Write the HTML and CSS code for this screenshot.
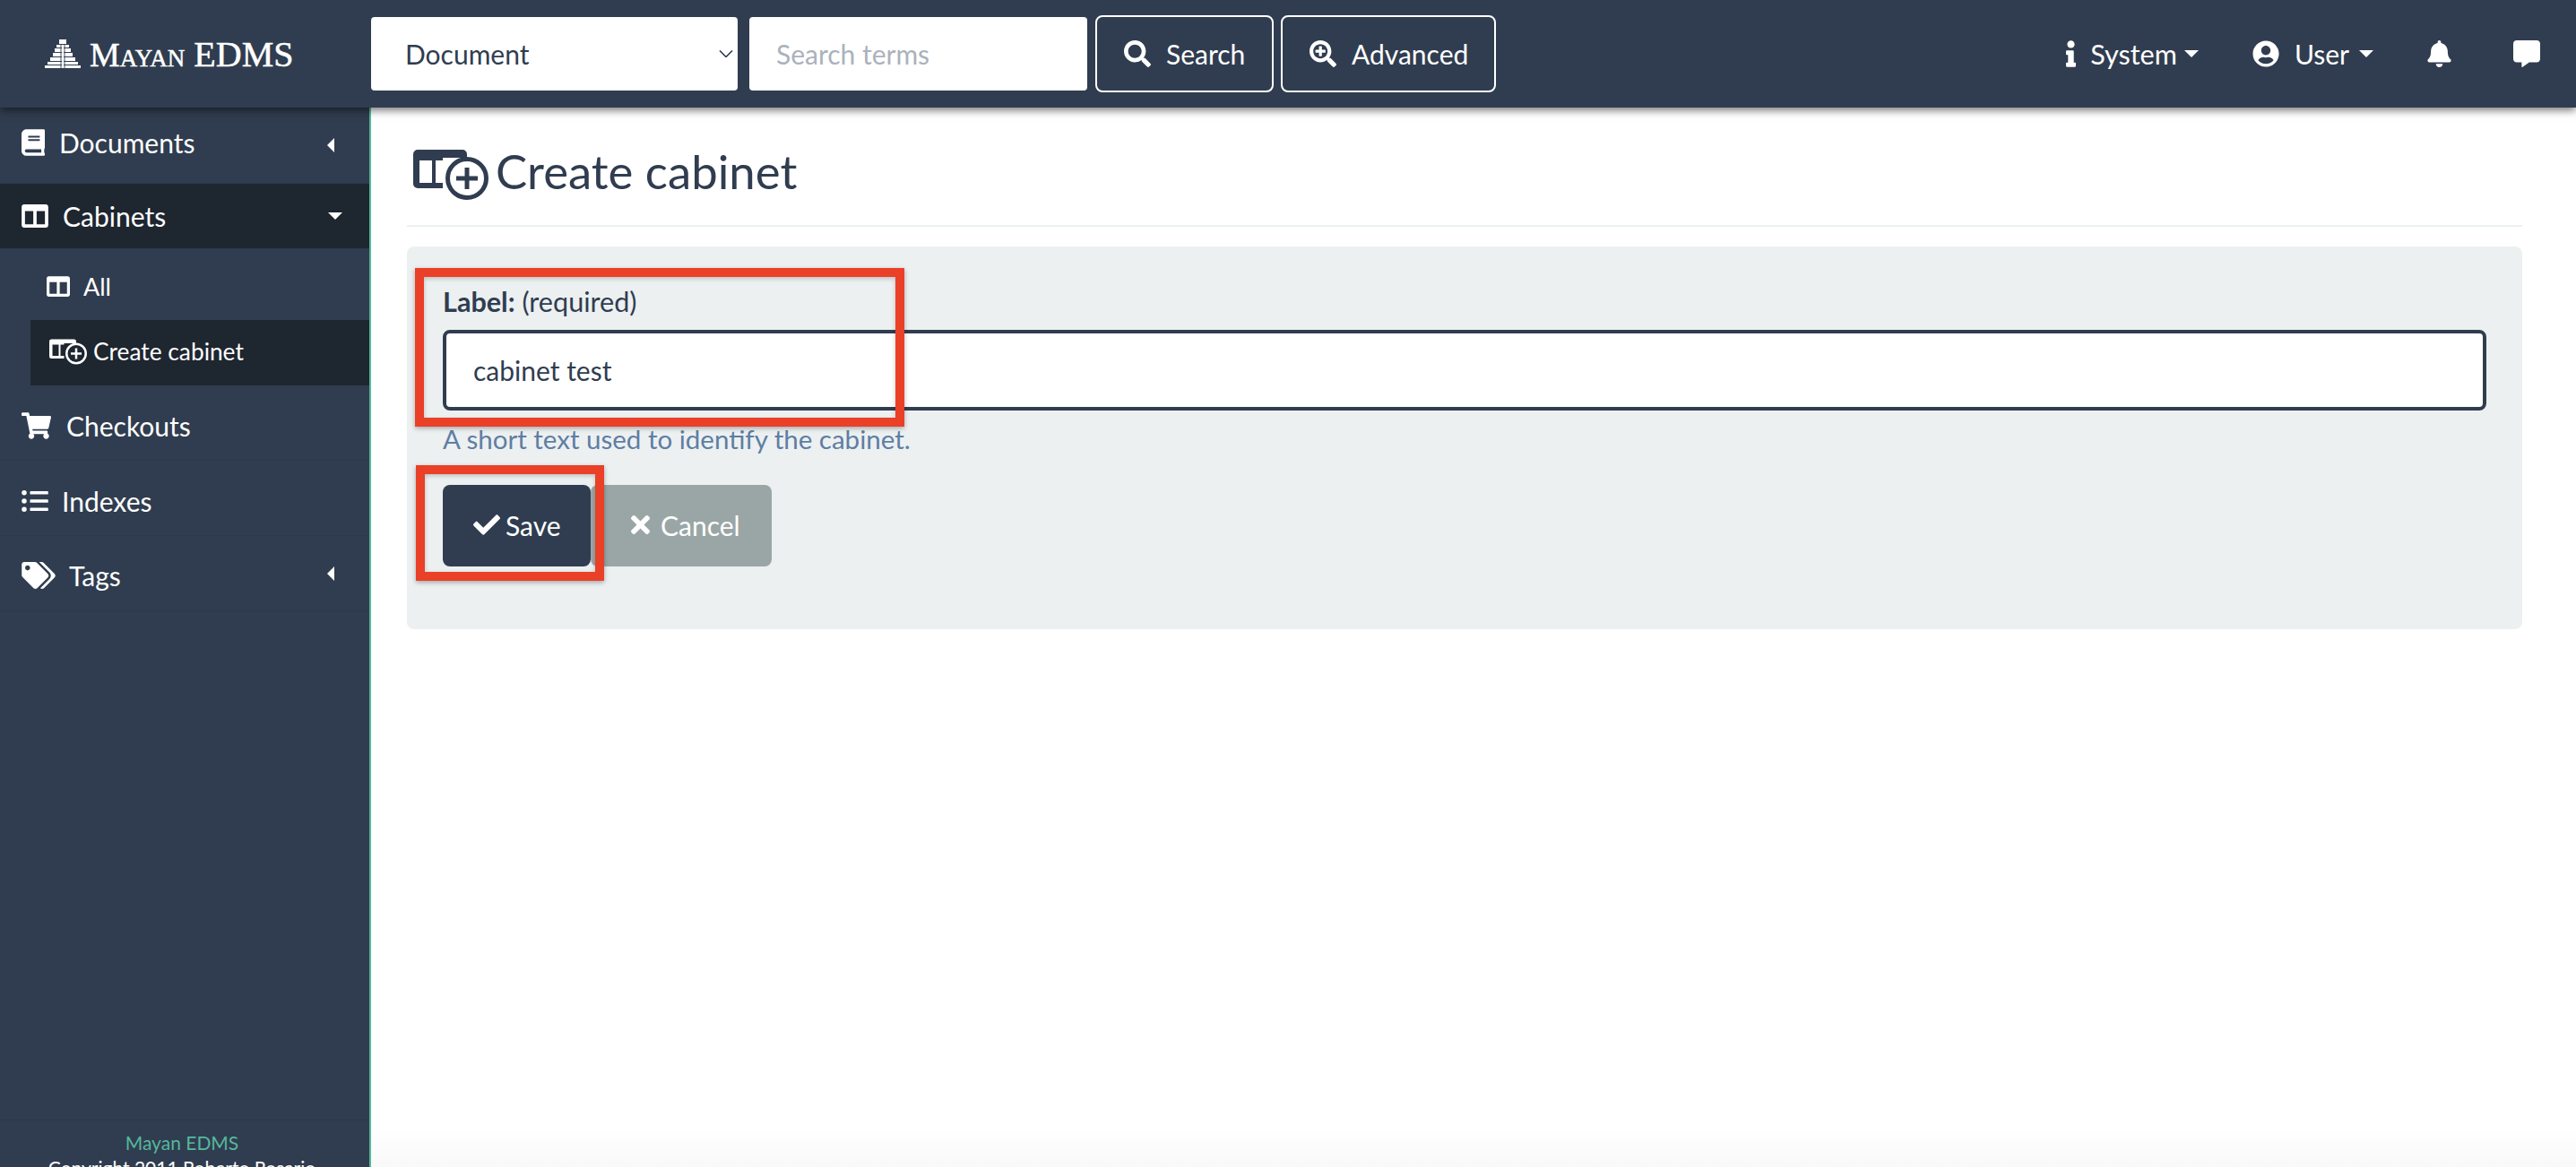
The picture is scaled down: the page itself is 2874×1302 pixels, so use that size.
FILE: index.html
```html
<!DOCTYPE html>
<html lang="en">
<head>
    <meta charset="UTF-8">
    <title>Create cabinet - Mayan EDMS</title>
    <link rel="stylesheet" href="styles.css">
</head>
<body>
    <svg class="sprite" xmlns="http://www.w3.org/2000/svg">
        <symbol id="i-search" viewBox="0 0 512 512"><path d="M505 442.7L405.3 343c-4.5-4.5-10.6-7-17-7H372c27.6-35.3 44-79.7 44-128C416 93.1 322.9 0 208 0S0 93.1 0 208s93.1 208 208 208c48.3 0 92.7-16.4 128-44v16.3c0 6.4 2.5 12.5 7 17l99.7 99.7c9.4 9.4 24.6 9.4 33.9 0l28.3-28.3c9.4-9.4 9.4-24.6.1-34zM208 336c-70.7 0-128-57.2-128-128 0-70.7 57.2-128 128-128 70.7 0 128 57.2 128 128 0 70.7-57.2 128-128 128z"/></symbol>
        <symbol id="i-search-plus" viewBox="0 0 512 512"><path d="M304 192v32c0 6.6-5.4 12-12 12h-56v56c0 6.6-5.4 12-12 12h-32c-6.6 0-12-5.4-12-12v-56h-56c-6.6 0-12-5.4-12-12v-32c0-6.6 5.4-12 12-12h56v-56c0-6.6 5.4-12 12-12h32c6.6 0 12 5.4 12 12v56h56c6.6 0 12 5.4 12 12zm201 284.7L476.7 505c-9.4 9.4-24.6 9.4-33.9 0L343 405.3c-4.5-4.5-7-10.6-7-17V372c-35.3 27.6-79.7 44-128 44C93.1 416 0 322.9 0 208S93.1 0 208 0s208 93.1 208 208c0 48.3-16.4 92.7-44 128h16.3c6.4 0 12.5 2.5 17 7l99.7 99.7c9.3 9.4 9.3 24.6 0 34zM344 208c0-75.2-60.8-136-136-136S72 132.8 72 208s60.8 136 136 136 136-60.8 136-136z"/></symbol>
        <symbol id="i-info" viewBox="0 0 192 512"><path d="M20 424.229h20V279.771H20c-11.046 0-20-8.954-20-20V212c0-11.046 8.954-20 20-20h112c11.046 0 20 8.954 20 20v212.229h20c11.046 0 20 8.954 20 20V492c0 11.046-8.954 20-20 20H20c-11.046 0-20-8.954-20-20v-47.771c0-11.046 8.954-20 20-20zM96 0C56.235 0 24 32.235 24 72s32.235 72 72 72 72-32.235 72-72S135.764 0 96 0z"/></symbol>
        <symbol id="i-user" viewBox="0 0 496 512"><path d="M248 8C111 8 0 119 0 256s111 248 248 248 248-111 248-248S385 8 248 8zm0 96c48.6 0 88 39.4 88 88s-39.4 88-88 88-88-39.4-88-88 39.4-88 88-88zm0 344c-58.7 0-111.3-26.6-146.5-68.2 18.8-35.4 55.6-59.8 98.5-59.8 2.4 0 4.8.4 7.1 1.1 13 4.2 26.6 6.9 40.9 6.9 14.3 0 28-2.7 40.9-6.9 2.3-.7 4.7-1.1 7.1-1.1 42.9 0 79.7 24.4 98.5 59.8C359.3 421.4 306.7 448 248 448z"/></symbol>
        <symbol id="i-bell" viewBox="0 0 448 512"><path d="M224 512c35.32 0 63.97-28.65 63.97-64H160.03c0 35.35 28.65 64 63.97 64zm215.39-149.71c-19.32-20.76-55.47-51.99-55.47-154.29 0-77.7-54.48-139.9-127.94-155.16V32c0-17.67-14.32-32-31.98-32s-31.98 14.33-31.98 32v20.84C118.56 68.1 64.08 130.3 64.08 208c0 102.3-36.15 133.53-55.47 154.29-6 6.45-8.66 14.16-8.61 21.71.11 16.4 12.98 32 32.1 32h383.8c19.12 0 32-15.6 32.1-32 .05-7.55-2.61-15.27-8.61-21.71z"/></symbol>
        <symbol id="i-comment" viewBox="0 0 512 512"><path d="M448 0H64C28.7 0 0 28.7 0 64v288c0 35.3 28.7 64 64 64h96v84c0 9.8 11.2 15.5 19.1 9.7L304 416h144c35.3 0 64-28.7 64-64V64c0-35.3-28.7-64-64-64z"/></symbol>
        <symbol id="i-book" viewBox="0 0 448 512"><path d="M448 360V24c0-13.3-10.7-24-24-24H96C43 0 0 43 0 96v320c0 53 43 96 96 96h328c13.3 0 24-10.7 24-24v-16c0-7.5-3.5-14.3-8.9-18.7-4.2-15.4-4.2-59.3 0-74.7 5.4-4.3 8.9-11.1 8.9-18.6zM128 134c0-3.3 2.7-6 6-6h212c3.3 0 6 2.7 6 6v20c0 3.3-2.7 6-6 6H134c-3.3 0-6-2.7-6-6v-20zm0 64c0-3.3 2.7-6 6-6h212c3.3 0 6 2.7 6 6v20c0 3.3-2.7 6-6 6H134c-3.3 0-6-2.7-6-6v-20zm253.4 250H96c-17.7 0-32-14.3-32-32 0-17.6 14.4-32 32-32h285.4c-1.9 17.1-1.9 46.9 0 64z"/></symbol>
        <symbol id="i-columns" viewBox="0 32 512 448"><path d="M464 32H48C21.49 32 0 53.49 0 80v352c0 26.51 21.49 48 48 48h416c26.51 0 48-21.49 48-48V80c0-26.51-21.49-48-48-48zM224 416H64V160h160v256zm224 0H288V160h160v256z"/></symbol>
        <symbol id="i-cart" viewBox="0 0 576 512"><path d="M528.12 301.319l47.273-208C578.806 78.301 567.391 64 551.99 64H159.208l-9.166-44.81C147.758 8.021 137.93 0 126.529 0H24C10.745 0 0 10.745 0 24v16c0 13.255 10.745 24 24 24h69.883l70.248 343.435C147.325 417.1 136 435.222 136 456c0 30.928 25.072 56 56 56s56-25.072 56-56c0-15.674-6.447-29.835-16.824-40h209.647C430.447 426.165 424 440.326 424 456c0 30.928 25.072 56 56 56s56-25.072 56-56c0-22.172-12.888-41.332-31.579-50.405l5.517-24.276c3.413-15.018-8.002-29.319-23.403-29.319H218.117l-6.545-32h293.145c11.206 0 20.92-7.754 23.403-18.681z"/></symbol>
        <symbol id="i-list" viewBox="0 48 512 416"><path d="M48 48a48 48 0 1 0 48 48 48 48 0 0 0-48-48zm0 160a48 48 0 1 0 48 48 48 48 0 0 0-48-48zm0 160a48 48 0 1 0 48 48 48 48 0 0 0-48-48zm448 16H176a16 16 0 0 0-16 16v32a16 16 0 0 0 16 16h320a16 16 0 0 0 16-16v-32a16 16 0 0 0-16-16zm0-320H176a16 16 0 0 0-16 16v32a16 16 0 0 0 16 16h320a16 16 0 0 0 16-16V80a16 16 0 0 0-16-16zm0 160H176a16 16 0 0 0-16 16v32a16 16 0 0 0 16 16h320a16 16 0 0 0 16-16v-32a16 16 0 0 0-16-16z"/></symbol>
        <symbol id="i-tags" viewBox="0 0 640 512"><path d="M497.941 225.941L286.059 14.059A48 48 0 0 0 252.118 0H48C21.49 0 0 21.49 0 48v204.118a48 48 0 0 0 14.059 33.941l211.882 211.882c18.744 18.745 49.136 18.746 67.882 0l204.118-204.118c18.745-18.745 18.745-49.137 0-67.882zM112 160c-26.51 0-48-21.49-48-48s21.49-48 48-48 48 21.49 48 48-21.49 48-48 48zm513.941 133.823L421.823 497.941c-18.745 18.745-49.137 18.745-67.882 0l-.36-.36L527.64 323.522c16.999-16.999 26.36-39.6 26.36-63.64s-9.362-46.641-26.36-63.64L331.397 0h48.721a48 48 0 0 1 33.941 14.059l211.882 211.882c18.745 18.745 18.745 49.137 0 67.882z"/></symbol>
        <symbol id="i-check" viewBox="0 64 512 384"><path d="M173.898 439.404l-166.4-166.4c-9.997-9.997-9.997-26.206 0-36.204l36.203-36.204c9.997-9.998 26.207-9.998 36.204 0L192 312.69 432.095 72.596c9.997-9.997 26.207-9.997 36.204 0l36.203 36.204c9.997 9.997 9.997 26.206 0 36.204l-294.4 294.401c-9.998 9.997-26.207 9.997-36.204-.001z"/></symbol>
        <symbol id="i-times" viewBox="0 80 352 352"><path d="M242.72 256l100.07-100.07c12.28-12.28 12.28-32.19 0-44.48l-22.24-22.24c-12.28-12.28-32.19-12.28-44.48 0L176 189.28 75.93 89.21c-12.28-12.28-32.19-12.28-44.48 0L9.21 111.45c-12.28 12.28-12.28 32.19 0 44.48L109.28 256 9.21 356.07c-12.28 12.28-12.28 32.19 0 44.48l22.24 22.24c12.28 12.28 32.2 12.28 44.48 0L176 322.72l100.07 100.07c12.28 12.28 32.2 12.28 44.48 0l22.24-22.24c12.28-12.28 12.28-32.19 0-44.48L242.72 256z"/></symbol>
        <symbol id="i-create" viewBox="0 0 84 58">
            <path d="M5 1h50a5 5 0 0 1 5 5v4H33v34H5a5 5 0 0 1-5-5V6a5 5 0 0 1 5-5z"/>
            <path d="M7 13h14v25H7z" fill="var(--cut)"/>
            <path d="M25 13h15v25H25z" fill="var(--cut)"/>
            <circle cx="60" cy="33" r="21.5" fill="var(--cut)" stroke="currentColor" stroke-width="5"/>
            <path d="M60 21v24M48 33h24" stroke="currentColor" stroke-width="5"/>
        </symbol>
    </svg>

    <header class="topbar">
        <a class="brand">
            <svg class="brand-logo" viewBox="0 0 40 32">
                <path d="M16 0h8v5h-8zM13 6h14v3H13zM11 10h18v4H11zM9 15h22v4H9zM6 20h28v4H6zM3 25h34v3H3zM0 29h40v3H0z"/>
                <path d="M17 6h6v26h-6z" fill="#303d50" opacity=".45"/>
                <path d="M19 6h2v26h-2z"/>
            </svg>
            <span class="brand-name"><span class="brand-small">Mayan</span> EDMS</span>
        </a>
        <form class="search-form">
            <div class="select-wrap">
                <select class="search-select"><option>Document</option></select>
                <svg class="select-arrow" viewBox="0 0 16 8"><path d="M1 .5l7 7 7-7"/></svg>
            </div>
            <input class="search-input" type="text" placeholder="Search terms">
            <button class="btn-outline btn-search" type="button"><svg class="icon-btn"><use href="#i-search"/></svg>Search</button>
            <button class="btn-outline btn-advanced" type="button"><svg class="icon-btn"><use href="#i-search-plus"/></svg>Advanced</button>
        </form>
        <nav class="top-nav">
            <a class="top-link link-system"><svg class="icon-info"><use href="#i-info"/></svg>System<span class="caret-down"></span></a>
            <a class="top-link link-user"><svg class="icon-user"><use href="#i-user"/></svg>User<span class="caret-down"></span></a>
            <a class="top-link link-bell"><svg class="icon-bell"><use href="#i-bell"/></svg></a>
            <a class="top-link link-comment"><svg class="icon-comment"><use href="#i-comment"/></svg></a>
        </nav>
    </header>

    <div class="layout">
        <aside class="sidebar">
            <ul class="side-menu">
                <li class="side-item item-documents">
                    <svg class="side-icon icon-book"><use href="#i-book"/></svg>Documents<span class="caret-left"></span>
                </li>
                <li class="side-item item-cabinets active">
                    <svg class="side-icon icon-columns"><use href="#i-columns"/></svg>Cabinets<span class="caret-open"></span>
                </li>
                <li class="sub-menu">
                    <a class="sub-item item-all"><svg class="sub-icon"><use href="#i-columns"/></svg>All</a>
                    <a class="sub-item item-create active"><svg class="sub-create"><use href="#i-create"/></svg>Create cabinet</a>
                </li>
                <li class="side-item item-checkouts">
                    <svg class="side-icon icon-cart"><use href="#i-cart"/></svg>Checkouts
                </li>
                <li class="side-item item-indexes">
                    <svg class="side-icon icon-list"><use href="#i-list"/></svg>Indexes
                </li>
                <li class="side-item item-tags">
                    <svg class="side-icon icon-tags"><use href="#i-tags"/></svg>Tags<span class="caret-left"></span>
                </li>
            </ul>
            <footer class="side-footer">
                <div class="footer-name">Mayan EDMS</div>
                <div class="footer-copy">Copyright 2011 Roberto Rosario</div>
            </footer>
        </aside>

        <main class="content">
            <h1 class="page-title"><svg class="title-icon"><use href="#i-create"/></svg>Create cabinet</h1>
            <form class="well">
                <label class="field-label" for="label"><strong>Label:</strong> (required)</label>
                <input class="field-input" id="label" type="text" value="cabinet test">
                <p class="field-help">A short text used to identify the cabinet.</p>
                <div class="form-buttons">
                    <button class="btn btn-save" type="button"><svg class="icon-check"><use href="#i-check"/></svg>Save</button>
                    <button class="btn btn-cancel" type="button"><svg class="icon-times"><use href="#i-times"/></svg>Cancel</button>
                </div>
                <div class="callout callout-field"></div>
                <div class="callout callout-save"></div>
            </form>
        </main>
    </div>
</body>
</html>
```

FILE: styles.css
```css
:root {
    --navy: #303d50;
    --navy-dark: #1e2630;
    --teal: #55b89c;
    --well: #ecf0f1;
    --red: #ea4027;
    --cut: #303d50;
}

* {
    margin: 0;
    padding: 0;
    box-sizing: border-box;
}

html, body {
    height: 100%;
    overflow: hidden;
}

body {
    font-family: Lato, "Open Sans", sans-serif;
    font-size: 30px;
    color: var(--navy);
    background-color: #fff;
}

svg {
    fill: currentColor;
    flex: none;
}

.sprite {
    display: none;
}

/* top bar */
.topbar {
    position: relative;
    z-index: 5;
    display: flex;
    align-items: center;
    height: 120px;
    background-color: var(--navy);
    color: #fff;
    box-shadow: 0 3px 9px rgba(0, 0, 0, 0.55);
}

.brand {
    display: flex;
    align-items: center;
    width: 414px;
    padding-left: 50px;
}

.brand-logo {
    width: 40px;
    height: 32px;
    margin-right: 10px;
}

.brand-name {
    font-family: "Liberation Serif", serif;
    font-size: 40px;
    -webkit-text-stroke: 0.5px #fff;
}

.brand-small {
    font-variant: small-caps;
    font-size: 38px;
}

.search-form {
    display: flex;
    align-items: center;
}

.select-wrap {
    position: relative;
    margin-right: 13px;
}

.search-select {
    display: block;
    appearance: none;
    width: 409px;
    height: 82px;
    padding-left: 38px;
    border: 0;
    border-radius: 4px;
    background-color: #fff;
    color: var(--navy);
    font: 30px Lato, sans-serif;
}

.select-arrow {
    position: absolute;
    right: 5px;
    top: 37px;
    width: 16px;
    height: 8px;
    fill: none;
    stroke: #303d50;
    stroke-width: 1.6;
}

.search-input {
    width: 377px;
    height: 82px;
    margin-right: 9px;
    padding-left: 30px;
    border: 0;
    border-radius: 4px;
    font: 30px Lato, sans-serif;
}

.search-input::placeholder {
    color: #aab2bd;
}

.btn-outline {
    display: flex;
    align-items: center;
    height: 86px;
    border: 2px solid #fff;
    border-radius: 8px;
    background: transparent;
    color: #fff;
    font: 30px Lato, sans-serif;
}

.btn-search {
    width: 199px;
    margin-right: 8px;
    padding-left: 30px;
}

.btn-advanced {
    width: 240px;
    padding-left: 30px;
}

.icon-btn {
    width: 30px;
    height: 30px;
    margin-right: 17px;
}

.top-nav {
    display: flex;
    align-items: center;
    margin-left: auto;
    padding-right: 40px;
}

.top-link {
    display: flex;
    align-items: center;
}

.link-system {
    margin-right: 60px;
    font-size: 30.6px;
}

.link-system .caret-down {
    margin-left: 8px;
}

.link-user {
    margin-right: 60px;
}

.link-bell {
    margin-right: 69px;
}

.icon-info {
    width: 11px;
    height: 30px;
    margin-right: 16px;
}

.icon-user {
    width: 30px;
    height: 30px;
    margin-right: 17px;
}

.icon-bell {
    width: 27px;
    height: 30px;
}

.icon-comment {
    width: 30px;
    height: 30px;
}

.caret-down {
    width: 0;
    height: 0;
    margin-left: 11px;
    border-left: 8px solid transparent;
    border-right: 8px solid transparent;
    border-top: 8px solid #fff;
}

/* sidebar */
.layout {
    display: flex;
    height: 1182px;
}

.sidebar {
    flex: none;
    width: 414px;
    background-color: var(--navy);
    border-right: 2px solid var(--teal);
    color: #fff;
    overflow: hidden;
}

.side-menu {
    height: 1130px;
    list-style: none;
    border-bottom: 1px solid #2b3748;
}

.side-item {
    position: relative;
    display: flex;
    align-items: center;
    height: 84px;
    padding: 6px 0 0 24px;
    border-bottom: 1px solid #2c394b;
}

.item-documents {
    height: 85px;
    padding: 0 0 7px 24px;
}

.item-cabinets {
    height: 73px;
    padding: 0 0 0 24px;
}

.item-tags {
    padding-top: 4px;
}

.side-item.active, .sub-item.active {
    background-color: var(--navy-dark);
}

.side-icon {
    height: 30px;
}

.icon-book {
    width: 26px;
    margin-right: 16px;
}

.icon-columns {
    width: 30px;
    height: 26px;
    margin-right: 16px;
}

.icon-cart {
    width: 33px;
    margin-right: 17px;
}

.icon-list {
    width: 30px;
    height: 24px;
    margin-right: 15px;
}

.icon-tags {
    width: 38px;
    margin-right: 15px;
}

.caret-left {
    position: absolute;
    right: 39px;
    top: 50%;
    margin-top: -8px;
    border-top: 8px solid transparent;
    border-bottom: 8px solid transparent;
    border-right: 8px solid #fff;
}

.caret-open {
    position: absolute;
    right: 30px;
    top: 50%;
    margin-top: -4px;
    border-left: 8px solid transparent;
    border-right: 8px solid transparent;
    border-top: 8px solid #fff;
}

.sub-menu {
    padding-left: 34px;
    font-size: 27px;
}

.sub-item {
    display: flex;
    align-items: center;
    height: 73px;
    padding-left: 18px;
}

.item-all {
    height: 79px;
    padding-top: 4px;
}

.item-create {
    --cut: var(--navy-dark);
    padding: 0 0 3px 21px;
    font-size: 26.3px;
}

.sub-icon {
    width: 26px;
    height: 23px;
    margin-right: 15px;
}

.sub-create {
    width: 42px;
    height: 29px;
    margin-right: 7px;
}

.side-footer {
    padding: 11px 6px 0 0;
    text-align: center;
    font-size: 21px;
    line-height: 28px;
}

.footer-name {
    color: var(--teal);
}

/* content */
.content {
    flex: 1;
    min-width: 0;
    padding: 0 60px 0 40px;
    background: linear-gradient(to bottom, #fff calc(100% - 45px), #f9f9f9);
}

.page-title {
    display: flex;
    align-items: center;
    height: 133px;
    padding: 10px 0 0 7px;
    border-bottom: 2px solid var(--well);
    font-size: 52.7px;
    font-weight: 400;
}

.title-icon {
    width: 84px;
    height: 58px;
    margin: 8px 8px 0 0;
    --cut: #fff;
}

.well {
    position: relative;
    height: 427px;
    margin-top: 22px;
    padding: 40px;
    background-color: var(--well);
    border-radius: 8px;
}

.field-label {
    display: block;
    height: 53px;
    font-size: 30.6px;
    line-height: 44px;
}

.field-input {
    display: block;
    width: 100%;
    height: 90px;
    padding-left: 30px;
    border: 4px solid var(--navy);
    border-radius: 8px;
    background-color: #fff;
    color: var(--navy);
    font: 30px Lato, sans-serif;
}

.field-help {
    height: 83px;
    padding-top: 12px;
    color: #5f7ea3;
    font-size: 29.5px;
    line-height: 40px;
}

.form-buttons {
    display: flex;
}

.btn {
    display: flex;
    align-items: center;
    height: 91px;
    padding: 0 0 2px 34px;
    border: 0;
    border-radius: 8px;
    color: #fff;
    font: 30px Lato, sans-serif;
}

.btn-save {
    width: 165px;
    background-color: var(--navy);
}

.btn-cancel {
    width: 202px;
    background-color: #9aa6a6;
    padding-left: 45px;
}

.icon-check {
    width: 30px;
    height: 23px;
    margin-right: 6px;
}

.icon-times {
    width: 21px;
    height: 21px;
    margin-right: 12px;
}

/* red annotation boxes drawn over the form */
.callout {
    position: absolute;
    border: 10px solid var(--red);
    box-shadow: 0 2px 5px rgba(0, 0, 0, 0.3), inset 0 2px 5px rgba(0, 0, 0, 0.2);
    pointer-events: none;
}

.callout-field {
    left: 9px;
    top: 24px;
    width: 546px;
    height: 177px;
}

.callout-save {
    left: 10px;
    top: 244px;
    width: 210px;
    height: 129px;
}
```
